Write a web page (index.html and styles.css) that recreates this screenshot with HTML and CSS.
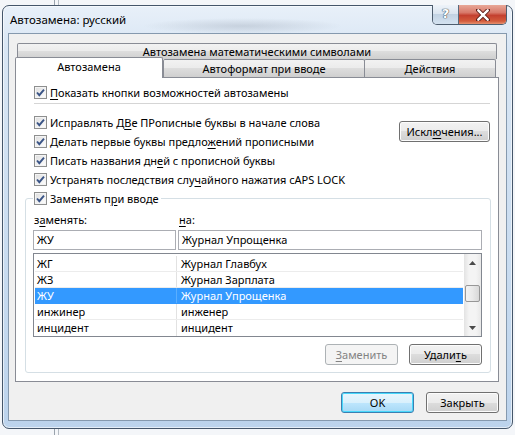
FILE: index.html
```html
<!DOCTYPE html>
<html lang="ru">
<head>
<meta charset="utf-8">
<title>Автозамена: русский</title>
<link rel="stylesheet" href="styles.css">
</head>
<body>
<div class="window">
  <div class="titlebar">
    <span class="title">Автозамена: русский</span>
    <div class="caption">
      <div class="cap-help">?</div>
      <div class="cap-close">
        <svg width="14" height="12" viewBox="0 0 14 12"><path d="M2 1 L12 11 M12 1 L2 11" stroke="#5a1d18" stroke-width="4.2" stroke-linecap="round"/><path d="M2.3 1.3 L11.7 10.7 M11.7 1.3 L2.3 10.7" stroke="#fff" stroke-width="2.4" stroke-linecap="round"/></svg>
      </div>
    </div>
  </div>
  <div class="client">
    <div class="tabs">
      <div class="tabrow back">
        <div class="tab full">Автозамена математическими символами</div>
      </div>
      <div class="tabrow front">
        <div class="tab sel">Автозамена</div>
        <div class="tab t2">Автоформат при вводе</div>
        <div class="tab t3">Действия</div>
      </div>
      <div class="panel">
        <label class="chk first"><span class="cb"><svg width="11" height="11" viewBox="0 0 11 11"><path d="M2 5.5 L4.3 8.2 L9 2.6" fill="none" stroke="#3a5486" stroke-width="1.9"/></svg></span><span><u>П</u>оказать кнопки возможностей автозамены</span></label>
        <div class="sep"></div>
        <div class="upper">
          <div class="opts">
            <label class="chk"><span class="cb"><svg width="11" height="11" viewBox="0 0 11 11"><path d="M2 5.5 L4.3 8.2 L9 2.6" fill="none" stroke="#3a5486" stroke-width="1.9"/></svg></span><span>Исправлять Д<u>В</u>е ПРописные буквы в начале слова</span></label>
            <label class="chk"><span class="cb"><svg width="11" height="11" viewBox="0 0 11 11"><path d="M2 5.5 L4.3 8.2 L9 2.6" fill="none" stroke="#3a5486" stroke-width="1.9"/></svg></span><span>Делать первые буквы предло<u>ж</u>ений прописными</span></label>
            <label class="chk"><span class="cb"><svg width="11" height="11" viewBox="0 0 11 11"><path d="M2 5.5 L4.3 8.2 L9 2.6" fill="none" stroke="#3a5486" stroke-width="1.9"/></svg></span><span>Писать названия дн<u>е</u>й с прописной буквы</span></label>
            <label class="chk"><span class="cb"><svg width="11" height="11" viewBox="0 0 11 11"><path d="M2 5.5 L4.3 8.2 L9 2.6" fill="none" stroke="#3a5486" stroke-width="1.9"/></svg></span><span>Устранять последствия слу<u>ч</u>айного нажатия cAPS LOCK</span></label>
          </div>
          <div class="btn exc">Искл<u>ю</u>чения...</div>
        </div>
        <fieldset class="group">
          <legend><label class="chk"><span class="cb"><svg width="11" height="11" viewBox="0 0 11 11"><path d="M2 5.5 L4.3 8.2 L9 2.6" fill="none" stroke="#3a5486" stroke-width="1.9"/></svg></span><span>Заменять п<u>р</u>и вводе</span></label></legend>
          <div class="labels">
            <span class="lab1">з<u>а</u>менять:</span>
            <span class="lab2"><u>н</u>а:</span>
          </div>
          <div class="inputs">
            <div class="inp i1">ЖУ</div>
            <div class="inp i2">Журнал Упрощенка</div>
          </div>
          <div class="list">
            <div class="rows">
              <div class="row"><span class="c1">ЖГ</span><span class="c2">Журнал Главбух</span></div>
              <div class="row"><span class="c1">ЖЗ</span><span class="c2">Журнал Зарплата</span></div>
              <div class="row selected"><span class="c1">ЖУ</span><span class="c2">Журнал Упрощенка</span></div>
              <div class="row"><span class="c1">инжинер</span><span class="c2">инженер</span></div>
              <div class="row last"><span class="c1">инцидент</span><span class="c2">инцидент</span></div>
            </div>
            <div class="scroll">
              <div class="arrow"><svg width="7" height="4" viewBox="0 0 7 4"><path d="M0 4 L3.5 0 L7 4 Z" fill="#4a4a4a"/></svg></div>
              <div class="thumb"></div>
              <div class="track"></div>
              <div class="arrow"><svg width="7" height="4" viewBox="0 0 7 4"><path d="M0 0 L3.5 4 L7 0 Z" fill="#4a4a4a"/></svg></div>
            </div>
          </div>
          <div class="gbtns">
            <div class="btn disabled"><u>З</u>аменить</div>
            <div class="btn">Удали<u>т</u>ь</div>
          </div>
        </fieldset>
      </div>
    </div>
    <div class="footer">
      <div class="btn default">OK</div>
      <div class="btn">Закрыть</div>
    </div>
  </div>
</div>
</body>
</html>
```
FILE: styles.css
```css
html, body {
  margin: 0;
  padding: 0;
}
body {
  width: 515px;
  height: 435px;
  overflow: hidden;
  font-family: "Noto Sans", "Open Sans", sans-serif;
  font-size: 11px;
  color: #000;
  background:
    linear-gradient(90deg, transparent 54px, #9aa3ad 54px, #9aa3ad 55px, transparent 55px, transparent 58px, #b5bcc4 58px, #b5bcc4 59px, transparent 59px),
    #f4f6f9;
}
u { text-decoration: underline; text-underline-offset: 2px; }

.window {
  box-sizing: border-box;
  margin: 5px 0 0 2px;
  width: 511px;
  height: 424px;
  border: 1px solid #45566a;
  border-radius: 7px;
  padding: 0 5px 7px 5px;
  display: flex;
  flex-direction: column;
  background:
    radial-gradient(ellipse 100px 8px at 240px 20px, rgba(150,160,175,0.35), transparent),
    linear-gradient(180deg, #e8f0f9 0%, #d9e6f4 10%, #c9dcf0 60%, #bcd3ec 100%);
  box-shadow: inset 0 0 0 1px rgba(255,255,255,0.6);
}
.titlebar {
  height: 27px;
  display: flex;
  align-items: flex-start;
  flex: none;
}
.title {
  margin: 6px 0 0 2px;
  font-size: 11.5px;
  line-height: 16px;
  color: #000;
}
.caption {
  margin-left: auto;
  margin-top: -1px;
  display: flex;
  height: 19px;
  border: 1px solid #4e5d6e;
  border-top: none;
  border-radius: 0 0 5px 5px;
  overflow: hidden;
}
.cap-help {
  width: 26px;
  height: 19px;
  box-sizing: border-box;
  border-right: 1px solid #5a6a7c;
  background: linear-gradient(180deg, #eef3f9 0%, #dbe5f0 45%, #c2d2e3 50%, #d4e2f0 100%);
  text-align: center;
  font-family: "DejaVu Sans", sans-serif;
  font-size: 13px;
  font-weight: bold;
  line-height: 18px;
  color: #fff;
  text-shadow: 0 0 1px #45525f, 0 0 1px #45525f, 0 0 1px #45525f;
}
.cap-close {
  width: 47px;
  height: 19px;
  display: flex;
  align-items: center;
  justify-content: center;
  background: linear-gradient(180deg, #e8a898 0%, #d8796a 40%, #c4402f 55%, #d35b3c 85%, #e59170 100%);
}

.client {
  flex: 1;
  box-sizing: border-box;
  border: 1px solid #8599ae;
  background: #f0f0f0;
  padding: 9px 7px 0 6px;
  display: flex;
  flex-direction: column;
}
.tabs {
  display: flex;
  flex-direction: column;
}
.tabrow { display: flex; }
.tabrow.back {
  margin: 0 1px 0 2px;
  height: 16px;
}
.tab {
  box-sizing: border-box;
  border: 1px solid #898c95;
  border-bottom: none;
  border-radius: 2px 2px 0 0;
  background: linear-gradient(180deg, #f2f2f2 0%, #ebebeb 50%, #dddddd 50%, #cfcfcf 100%);
  text-align: center;
  line-height: 15px;
}
.tab.full { width: 480px; height: 16px; }
.tabrow.front {
  height: 18px;
}
.tab.sel {
  width: 148px;
  height: 21px;
  margin-top: -2px;
  margin-bottom: -1px;
  background: #fff;
  position: relative;
  z-index: 2;
  line-height: 18px;
}
.tab.t2 { width: 202px; height: 18px; line-height: 17px; }
.tab.t3 { width: 132px; height: 18px; margin-left: -1px; line-height: 17px; }

.panel {
  box-sizing: border-box;
  width: 484px;
  height: 305px;
  border: 1px solid #898c95;
  background: #fff;
  padding: 5px 8px 0 18px;
  display: flex;
  flex-direction: column;
}
.chk {
  display: flex;
  align-items: center;
  height: 19px;
  white-space: nowrap;
}
.cb {
  box-sizing: border-box;
  width: 13px;
  height: 13px;
  border: 1px solid #8e8f8f;
  background: linear-gradient(135deg, #dcdcdc 0%, #f2f2f2 60%, #fff 100%);
  box-shadow: inset 0 0 0 1px #f4f4f4;
  margin-right: 3px;
  display: flex;
  align-items: center;
  justify-content: center;
  flex: none;
}
.sep {
  height: 1px;
  background: #d5d5d5;
  margin: 1px 0 9px 0;
  width: 456px;
}
.upper {
  display: flex;
  justify-content: space-between;
}
.opts { display: flex; flex-direction: column; }
.btn {
  box-sizing: border-box;
  width: 73px;
  height: 21px;
  border: 1px solid #707070;
  border-radius: 3px;
  background: linear-gradient(180deg, #f2f2f2 0%, #ebebeb 50%, #dddddd 50%, #cfcfcf 100%);
  box-shadow: inset 0 0 0 1px #fcfcfc;
  text-align: center;
  line-height: 19px;
  white-space: nowrap;
}
.btn.exc {
  width: 91px;
  margin-top: 8px;
}
.btn.disabled {
  border-color: #adb2b5;
  background: #f4f4f4;
  color: #838383;
  box-shadow: none;
}
.btn.default {
  border-color: #3c7fb1;
  background: linear-gradient(180deg, #eaf6fd 0%, #d9f0fc 50%, #bee6fd 50%, #a7d9f5 100%);
  box-shadow: inset 0 0 0 1px #48d8fb;
}

.group {
  box-sizing: border-box;
  width: 466px;
  margin: 0 0 0 -9px;
  padding: 0 7px 7px 7px;
  border: 1px solid #d5dfe5;
  border-radius: 3px;
  min-width: 0;
}
.group legend {
  padding: 0 2px 0 1px;
  margin-left: 0;
}
.labels {
  display: flex;
  height: 16px;
  align-items: center;
  margin-top: 3px;
}
.lab1 { width: 145px; padding-left: 1px; }
.inputs {
  display: flex;
  margin-top: 3px;
  gap: 2px;
}
.inp {
  box-sizing: border-box;
  height: 20px;
  border: 1px solid #abadb3;
  background: #fff;
  line-height: 18px;
  padding-left: 3px;
}
.i1 { width: 143px; }
.i2 { width: 304px; }
.list {
  box-sizing: border-box;
  margin-top: 3px;
  height: 84px;
  width: 449px;
  border: 1px solid #828790;
  background: #fff;
  display: flex;
}
.rows {
  flex: 1;
  padding: 2px 1px 0 1px;
  overflow: hidden;
}
.row {
  display: flex;
  height: 16px;
  line-height: 15px;
  box-sizing: border-box;
  border-bottom: 1px solid #ececec;
}
.row.last { border-bottom: none; }
.row .c1 {
  width: 142px;
  padding-left: 2px;
  box-sizing: border-box;
  border-right: 1px solid #e2e2e2;
}
.row .c2 { padding-left: 4px; }
.row.selected {
  background: #3399ff;
  color: #fff;
  border-bottom-color: #3399ff;
}
.row.selected .c1 { border-right-color: #5aaeff; }
.scroll {
  width: 17px;
  flex: none;
  display: flex;
  flex-direction: column;
  background: linear-gradient(90deg, #e3e3e3 0%, #f4f4f4 30%, #f4f4f4 70%, #e8e8e8 100%);
}
.arrow {
  height: 17px;
  display: flex;
  align-items: center;
  justify-content: center;
}
.thumb {
  box-sizing: border-box;
  margin: 14px 1px 0 1px;
  height: 17px;
  border: 1px solid #979797;
  border-radius: 2px;
  background: linear-gradient(90deg, #f3f3f3 0%, #e9e9e9 50%, #d8d8d8 100%);
}
.track { flex: 1; }
.gbtns {
  display: flex;
  justify-content: flex-end;
  gap: 11px;
  margin-top: 7px;
  padding-right: 1px;
}

.footer {
  display: flex;
  justify-content: flex-end;
  gap: 12px;
  margin-top: 10px;
}
```
